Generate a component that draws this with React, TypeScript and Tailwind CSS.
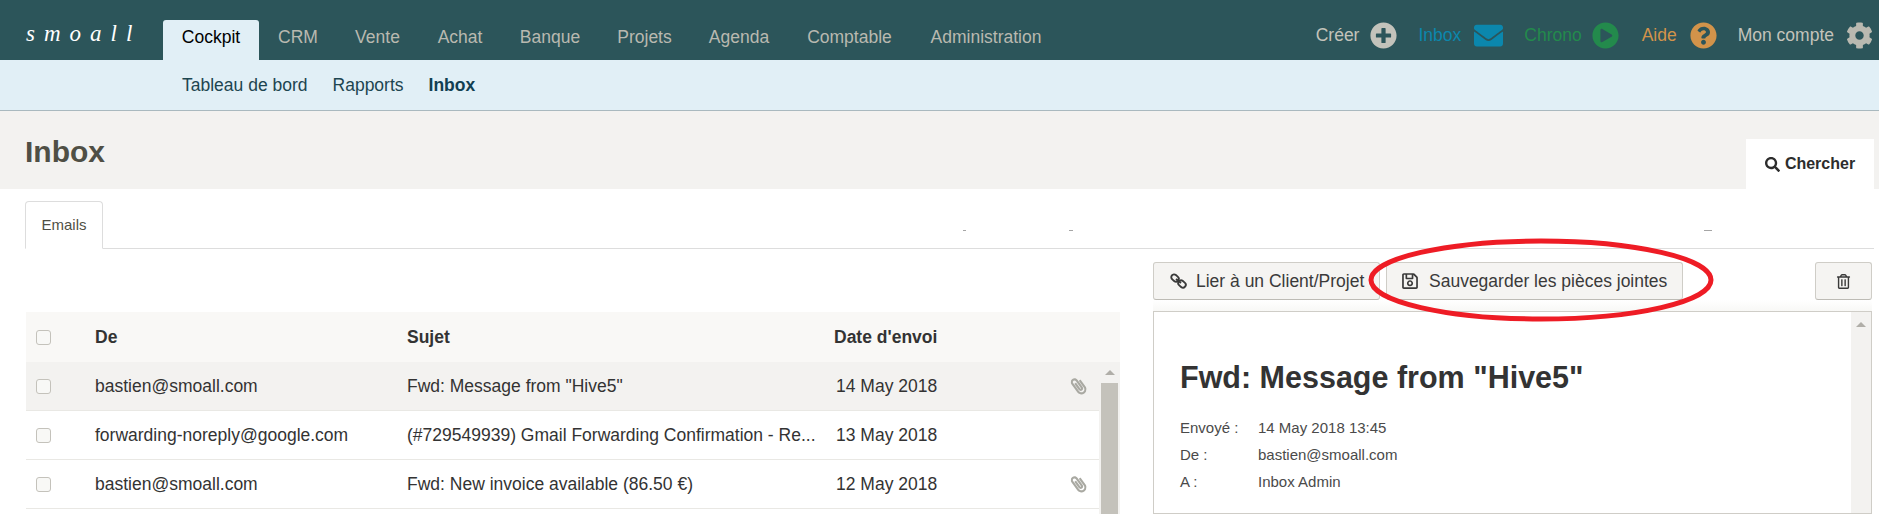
import React from "react";
import { FaPlusCircle, FaEnvelope, FaPlayCircle, FaQuestionCircle, FaCog, FaSearch, FaRegSave, FaRegTrashAlt, FaPaperclip } from "react-icons/fa";

const nav = [
  { t: "CRM", w: "w-[76px]" },
  { t: "Vente", w: "w-[83px]" },
  { t: "Achat", w: "w-[82px]" },
  { t: "Banque", w: "w-[98px]" },
  { t: "Projets", w: "w-[91px]" },
  { t: "Agenda", w: "w-[98px]" },
  { t: "Comptable", w: "w-[123px]" },
  { t: "Administration", w: "w-[150px]" },
];

const rows = [
  { de: "bastien@smoall.com", su: 'Fwd: Message from "Hive5"', da: "14 May 2018", clip: true, bg: "bg-[#f3f2f0]" },
  { de: "forwarding-noreply@google.com", su: "(#729549939) Gmail Forwarding Confirmation - Re...", da: "13 May 2018", clip: false, bg: "bg-white" },
  { de: "bastien@smoall.com", su: "Fwd: New invoice available (86.50 €)", da: "12 May 2018", clip: true, bg: "bg-white" },
];

function Box() {
  return <span className="block w-[15px] h-[15px] rounded-[3px] border border-[#c4c2bb] bg-[#f8f8f6]" />;
}

function ChainIcon() {
  return (
    <svg width="17" height="16" viewBox="0 0 17 16" fill="none" stroke="currentColor" strokeWidth="1.9">
      <rect x="1" y="2.2" width="8" height="5.6" rx="2.8" transform="rotate(40 5 5)" />
      <rect x="8" y="8.2" width="8" height="5.6" rx="2.8" transform="rotate(40 12 11)" />
      <path d="M6 6l5 4" />
    </svg>
  );
}

export default function App() {
  return (
    <div className="relative w-[1879px] h-[514px] overflow-hidden bg-white font-['Liberation_Sans',sans-serif] text-[17.5px] text-[#333333]">
      <header className="h-[60px] bg-[#2c555a] flex items-end">
        <div className="w-[163px] h-[60px] pl-[26px] pt-[19px] text-[23px] italic font-['Liberation_Serif',serif] text-white tracking-[9px] leading-[30px]">smoall</div>
        <div className="w-[96px] h-[40px] pb-[6px] rounded-t-[3px] bg-[#e1eff6] text-black flex items-center justify-center">Cockpit</div>
        <nav className="flex h-[40px] pb-[6px] pl-[1px] items-center text-[#b9b9b0]">
          {nav.map((n) => (
            <span key={n.t} className={`${n.w} text-center`}>{n.t}</span>
          ))}
        </nav>
        <div className="ml-auto h-[60px] flex items-center pr-[6px] pt-[11px]">
          <span className="text-[#c3c3bb]">Créer</span>
          <FaPlusCircle className="ml-[11px] text-[#c3c3bb] text-[27px]" />
          <span className="ml-[21px] text-[#0b87ad]">Inbox</span>
          <FaEnvelope className="ml-[13px] text-[#0b87ad] text-[29px]" />
          <span className="ml-[21px] text-[#238a4c]">Chrono</span>
          <FaPlayCircle className="ml-[10px] text-[#238a4c] text-[27px]" />
          <span className="ml-[23px] text-[#d2934a]">Aide</span>
          <FaQuestionCircle className="ml-[13px] text-[#d2934a] text-[27px]" />
          <span className="ml-[21px] text-[#c3c3bb]">Mon compte</span>
          <FaCog className="ml-[12px] text-[#b9b9b0] text-[27px]" />
        </div>
      </header>

      <div className="h-[51px] bg-[#e1eff6] border-b border-[#a9b9bf] flex items-center pl-[182px] gap-[25px] text-[#1d4550]">
        <span>Tableau de bord</span>
        <span>Rapports</span>
        <span className="font-bold text-[#123f52]">Inbox</span>
      </div>

      <div className="h-[78px] bg-[#f3f2f0] pl-[25px] pr-[5px] relative flex justify-between items-end">
        <h1 className="self-start mt-[24px] text-[30px] leading-[34px] font-bold text-[#4f4f45]">Inbox</h1>
        <div className="w-[128px] h-[50px] bg-white flex items-center justify-center gap-[5px] font-bold text-[16px] text-[#2d2d2d]">
          <FaSearch className="text-[15px]" />
          <span>Chercher</span>
        </div>
      </div>

      <div className="h-[60px] ml-[25px] mr-[5px] border-b border-[#dddddd] flex items-end">
        <div className="w-[78px] h-[48px] -mb-px mt-[12px] bg-white border border-b-white border-[#dddddd] rounded-t-[4px] flex items-center justify-center text-[15px] text-[#4f4f45]">Emails</div>
      </div>

      <div className="flex pl-[26px]">
        <section className="w-[1094px] pt-[63px]">
          <div className="h-[50px] bg-[#f9f8f6] flex items-center font-bold">
            <div className="w-[69px] pl-[10px]"><Box /></div>
            <div className="w-[312px]">De</div>
            <div className="w-[427px]">Sujet</div>
            <div>Date d'envoi</div>
          </div>
          <div className="flex">
            <div className="w-[1073px]">
              {rows.map((r) => (
                <div key={r.da} className={`h-[49px] ${r.bg} border-b border-[#e9e8e4] flex items-center`}>
                  <div className="w-[69px] pl-[10px]"><Box /></div>
                  <div className="w-[312px]">{r.de}</div>
                  <div className="w-[429px] truncate pr-[10px]">{r.su}</div>
                  <div className="w-[234px]">{r.da}</div>
                  {r.clip && <FaPaperclip className="text-[#a9a9a2] text-[17px] rotate-[-80deg]" />}
                </div>
              ))}
            </div>
            <div className="w-[21px] h-[152px] bg-[#f3f2f0] flex flex-col items-center">
              <div className="h-[21px] pt-[8px]"><div className="w-0 h-0 border-x-[5px] border-x-transparent border-b-[5px] border-b-[#b0aea8]" /></div>
              <div className="w-[17px] flex-1 bg-[#c4c2bb]" />
            </div>
          </div>
        </section>

        <section className="ml-[33px] w-[719px] pt-[13px]">
          <div className="flex h-[38px]">
            <button className="w-[227px] h-[38px] rounded-[3px] border border-[#cfcdc7] border-b-[#bdbbb5] bg-[#f5f4f2] flex items-center pl-[16px] gap-[9px] text-[#3a3a3a] whitespace-nowrap">
              <ChainIcon />
              <span>Lier à un Client/Projet</span>
            </button>
            <button className="ml-[6px] w-[297px] h-[38px] rounded-[3px] border border-[#cfcdc7] border-b-[#bdbbb5] bg-[#f5f4f2] flex items-center pl-[14px] gap-[10px] text-[#3a3a3a] whitespace-nowrap">
              <FaRegSave className="text-[18px]" />
              <span>Sauvegarder les pièces jointes</span>
            </button>
            <button className="ml-auto w-[57px] h-[38px] rounded-[3px] border border-[#cfcdc7] border-b-[#bdbbb5] bg-[#f5f4f2] flex items-center justify-center text-[#3a3a3a]">
              <FaRegTrashAlt className="text-[15px]" />
            </button>
          </div>
          <div className="h-[11px] bg-gradient-to-b from-white to-[#f8f8f6]" />
          <div className="h-[203px] border border-[#cfcdc7] flex">
            <div className="flex-1 pl-[26px] pt-[47px]">
              <h2 className="text-[30.5px] leading-[36px] font-bold text-[#333333]">Fwd: Message from "Hive5"</h2>
              <dl className="mt-[20px] text-[15px] text-[#4a4a4a] grid grid-cols-[78px_1fr] auto-rows-[27px] items-center">
                <dt>Envoyé :</dt><dd>14 May 2018 13:45</dd>
                <dt>De :</dt><dd>bastien@smoall.com</dd>
                <dt>A :</dt><dd>Inbox Admin</dd>
              </dl>
            </div>
            <div className="w-[20px] bg-[#f3f2f0] flex justify-center pt-[10px]">
              <div className="w-0 h-0 border-x-[5px] border-x-transparent border-b-[5px] border-b-[#b0aea8]" />
            </div>
          </div>
        </section>
      </div>

      <span className="absolute left-[963px] top-[230px] w-[3px] h-px bg-[#a5a5a5]" />
      <span className="absolute left-[1069px] top-[230px] w-[4px] h-px bg-[#a5a5a5]" />
      <span className="absolute left-[1704px] top-[230px] w-[8px] h-px bg-[#a5a5a5]" />

      <svg className="absolute left-[1367px] top-[238px] pointer-events-none" width="348" height="84" viewBox="0 0 348 84">
        <ellipse cx="174" cy="42" rx="170" ry="39" fill="none" stroke="#ee1c25" strokeWidth="5" />
      </svg>
    </div>
  );
}
